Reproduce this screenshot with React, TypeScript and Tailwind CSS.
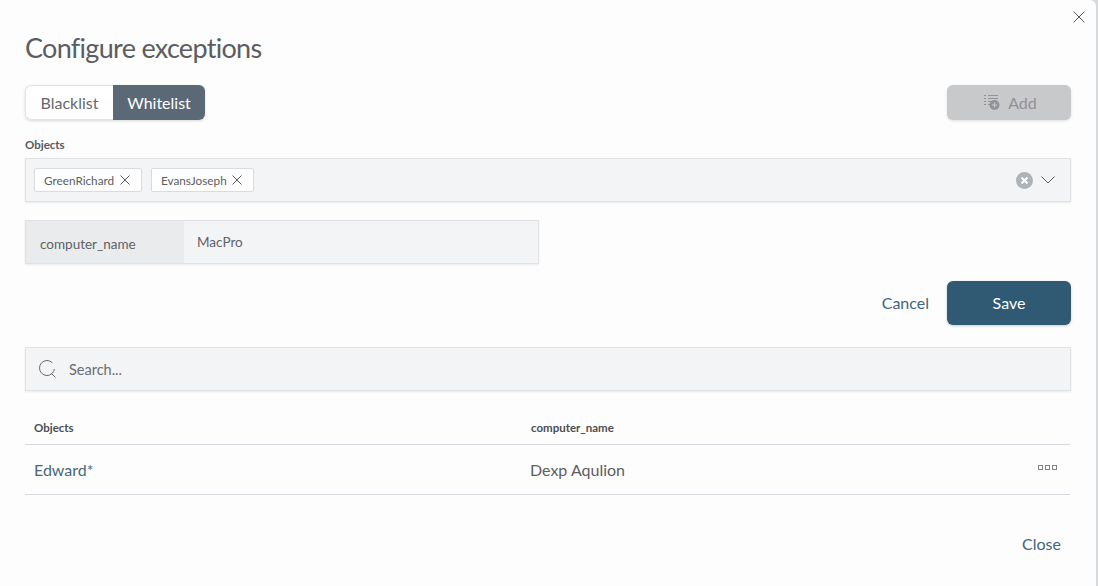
import React from 'react';

const font = { fontFamily: 'Lato, "Noto Sans", sans-serif' };

const Cross = ({ size, className, width = 1 }: { size: number; className: string; width?: number }) => (
  <svg width={size} height={size} viewBox={`0 0 ${size} ${size}`} className={className}>
    <path d={`M0.5 0.5L${size - 0.5} ${size - 0.5}M${size - 0.5} 0.5L0.5 ${size - 0.5}`} stroke="currentColor" strokeWidth={width} fill="none" />
  </svg>
);

const Chip = ({ label, className }: { label: string; className: string }) => (
  <div className={`flex h-6 items-center justify-between rounded-[2px] border border-[#d9dbe0] bg-white pl-[9px] pr-[11px] text-[11.75px] text-[#5a5d60] ${className}`}>
    <span className="pt-[2px]">{label}</span>
    <Cross size={10} className="mb-[1px] text-[#55585c]" />
  </div>
);

const AddListIcon = () => (
  <svg width="18" height="17" viewBox="0 0 18 17" className="text-[#8f9296]">
    <path d="M1 1.5h2M5 1.5h10M1 4.5h2M5 4.5h10M1 7.5h2M5 7.5h4M1 10.5h2M5 10.5h3" stroke="currentColor" strokeWidth="1" fill="none" />
    <circle cx="11.5" cy="11" r="5" fill="currentColor" />
    <path d="M11.5 8.5v5M9 11h5" stroke="#c8c9cb" strokeWidth="1.2" />
  </svg>
);

export default function App() {
  return (
    <div className="h-[586px] w-[1098px] overflow-hidden bg-[#d8d9db]" style={font}>
      <div className="relative h-[586px] w-[1096px] rounded-tr-md bg-[#fdfdfe] px-[25px]">
        <button className="absolute right-[11px] top-[11px] text-[#55585c]">
          <Cross size={12} className="" />
        </button>

        <h1 className="pt-[30px] text-[27px] leading-[36px] tracking-[-0.7px] text-[#5b5d60]">Configure exceptions</h1>

        <div className="mt-[19px] flex items-center justify-between">
          <div className="flex h-[35px] w-[180px] rounded-md text-[16px] shadow-[0_1px_3px_rgba(0,0,0,0.15)]">
            <div className="flex w-[88px] items-center justify-center rounded-l-md border border-r-0 border-[#e2e3e6] bg-white text-[#65686c]">Blacklist</div>
            <div className="flex w-[92px] items-center justify-center rounded-r-md bg-[#5b6977] text-white">Whitelist</div>
          </div>
          <button className="flex h-[35px] w-[124px] items-center justify-center gap-[7px] rounded-md bg-[#c8c9cb] pl-[2px] text-[16px] text-[#8f9296] shadow-[0_1px_3px_rgba(0,0,0,0.12)]">
            <AddListIcon />
            <span>Add</span>
          </button>
        </div>

        <div className="mt-[18px] text-[11.5px] font-bold leading-[14px] text-[#55585c]">Objects</div>
        <div className="mt-[6px] flex h-[44px] items-center border border-[#e0e1e5] bg-[#f3f4f6] pl-2 pr-[15px] shadow-[0_1px_2px_rgba(0,0,0,0.08)]">
          <Chip label="GreenRichard" className="w-[108px]" />
          <Chip label="EvansJoseph" className="ml-[9px] w-[103px]" />
          <div className="ml-auto flex h-[17px] w-[17px] items-center justify-center rounded-full bg-[#aeb3b8]">
            <Cross size={7} width={2} className="text-white" />
          </div>
          <svg width="14" height="8" viewBox="0 0 14 8" className="ml-[8px] text-[#55585c]">
            <path d="M0.5 0.5L7 7L13.5 0.5" stroke="currentColor" strokeWidth="1" fill="none" />
          </svg>
        </div>

        <div className="mt-[18px] flex h-[44px] w-[514px] border border-[#e0e1e5] bg-[#f3f4f6] text-[13.5px] text-[#5f6266] shadow-[0_1px_2px_rgba(0,0,0,0.08)]">
          <div className="flex w-[158px] items-center bg-[#e9ebed] pl-[14px] pt-[5px]">computer_name</div>
          <div className="flex items-center pl-[13px] pt-[1px]">MacPro</div>
        </div>

        <div className="mt-[17px] flex h-[44px] items-center justify-end">
          <button className="mr-[18px] text-[16px] text-[#3f6580]">Cancel</button>
          <button className="h-[44px] w-[124px] rounded-md bg-[#305974] text-[16px] text-white shadow-[0_1px_3px_rgba(0,0,0,0.2)]">Save</button>
        </div>

        <div className="mt-[22px] flex h-[44px] items-center border border-[#e0e1e5] bg-[#f3f4f6] pl-[13px] text-[14.5px] text-[#6a6d71] shadow-[0_1px_2px_rgba(0,0,0,0.08)]">
          <svg width="18" height="18" viewBox="0 0 18 18" className="text-[#6a6d71]">
            <circle cx="8" cy="8" r="7.5" stroke="currentColor" strokeWidth="1" fill="none" strokeDasharray="40 7" strokeDashoffset="-1" />
            <path d="M12.5 13.5L16.5 17.5" stroke="currentColor" strokeWidth="1" fill="none" />
          </svg>
          <span className="ml-[12px] pt-[1px]">Search...</span>
        </div>

        <div className="mr-[1px] mt-[30px] grid h-[24px] grid-cols-[497px_1fr] border-b border-[#d8d9de] pl-[9px] text-[11.5px] font-bold leading-[14px] text-[#4b4e52]">
          <div>Objects</div>
          <div>computer_name</div>
        </div>

        <div className="mr-[1px] grid h-[50px] grid-cols-[496px_1fr_auto] items-center border-b border-[#d8d9de] pl-[9px] text-[16px]">
          <div className="text-[#4a6579]">Edward*</div>
          <div className="text-[#5b5d60]">Dexp Aqulion</div>
          <div className="mr-[13px] mb-[4px] flex gap-[2px]">
            <span className="h-[5px] w-[5px] border border-[#808285]" />
            <span className="h-[5px] w-[5px] border border-[#808285]" />
            <span className="h-[5px] w-[5px] border border-[#808285]" />
          </div>
        </div>

        <div className="mt-[37px] flex justify-end pr-[10px]">
          <button className="text-[16px] leading-[24px] text-[#3f6580]">Close</button>
        </div>
      </div>
    </div>
  );
}
